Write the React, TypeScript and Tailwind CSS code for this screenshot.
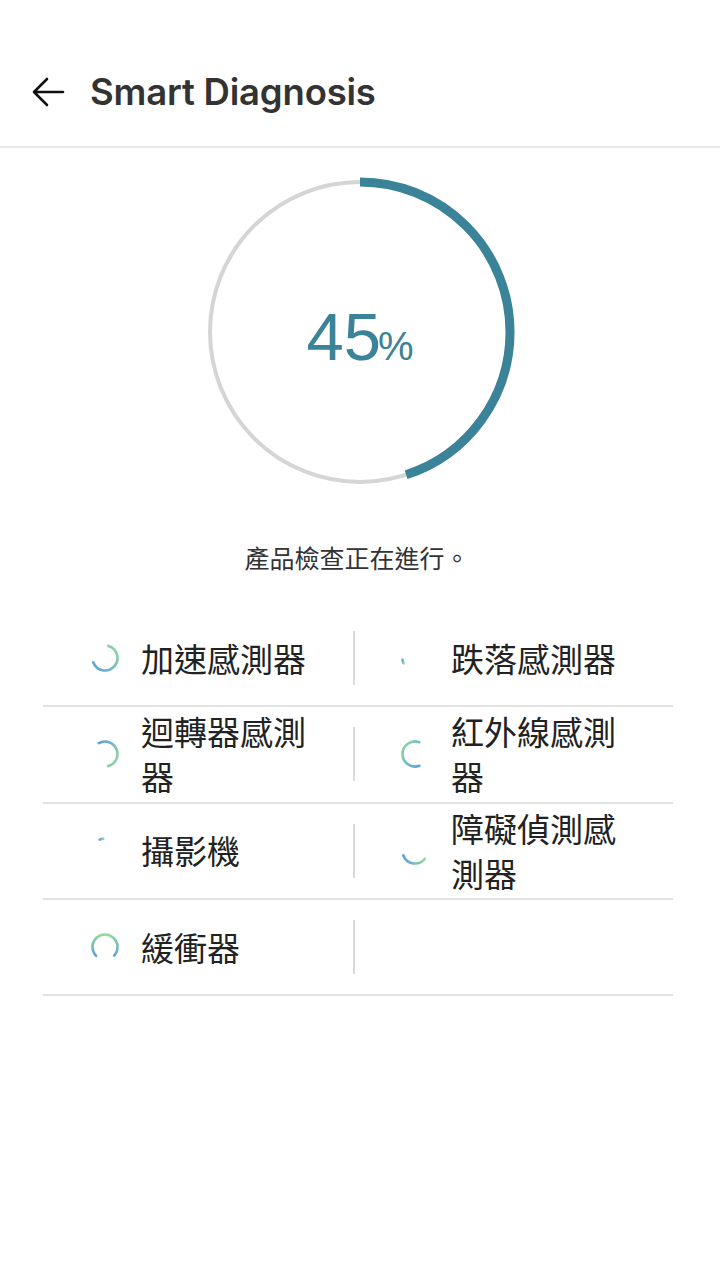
import { useId } from "react";

type Item = {
  label: string;
  // arc angles in degrees, clockwise from 12 o'clock
  start: number;
  end: number;
  // gradient direction: [x1, y1, x2, y2] in 0..1 box units
  dir: [number, number, number, number];
};

const BLUE = "#5f9fe0";
const GREEN = "#8fdb98";

const rows: (Item | null)[][] = [
  [
    { label: "加速感測器", start: 15, end: 250, dir: [0, 1, 1, 0] },
    { label: "跌落感測器", start: 245, end: 262, dir: [0, 0, 1, 1] },
  ],
  [
    { label: "迴轉器感測器", start: -30, end: 165, dir: [0, 0, 1, 1] },
    { label: "紅外線感測器", start: 160, end: 380, dir: [1, 1, 0, 0] },
  ],
  [
    { label: "攝影機", start: -25, end: -8, dir: [0, 0, 1, 0] },
    { label: "障礙偵測感測器", start: 128, end: 250, dir: [0, 0, 1, 0] },
  ],
  [{ label: "緩衝器", start: 225, end: 493, dir: [0, 1, 0, 0] }, null],
];

function point(cx: number, cy: number, r: number, deg: number) {
  const a = (deg * Math.PI) / 180;
  return [cx + r * Math.sin(a), cy - r * Math.cos(a)];
}

function arc(cx: number, cy: number, r: number, start: number, end: number) {
  const [x1, y1] = point(cx, cy, r, start);
  const [x2, y2] = point(cx, cy, r, end);
  const large = end - start > 180 ? 1 : 0;
  return `M ${x1} ${y1} A ${r} ${r} 0 ${large} 1 ${x2} ${y2}`;
}

function Spinner({ item }: { item: Item }) {
  const id = useId().replace(/:/g, "");
  const [x1, y1, x2, y2] = item.dir;
  return (
    <svg width="30" height="30" viewBox="0 0 30 30" className="shrink-0">
      <defs>
        <linearGradient id={id} x1={x1} y1={y1} x2={x2} y2={y2}>
          <stop offset="0" stopColor={BLUE} />
          <stop offset="1" stopColor={GREEN} />
        </linearGradient>
      </defs>
      <path
        d={arc(15, 15, 12.5, item.start, item.end)}
        fill="none"
        stroke={`url(#${id})`}
        strokeWidth="2.6"
        strokeLinecap="round"
      />
    </svg>
  );
}

function Cell({ item, right }: { item: Item | null; right?: boolean }) {
  return (
    <div className={right ? "flex w-[318px] items-center pl-[45px]" : "flex w-[310px] items-center pl-[47px]"}>
      {item ? (
        <>
          <Spinner item={item} />
          <span className="ml-[21px] max-w-[175px] text-[33px] leading-[45px] text-[#222]">
            {item.label}
          </span>
        </>
      ) : null}
    </div>
  );
}

function Ring() {
  const r = 150;
  const c = 2 * Math.PI * r;
  return (
    <div className="relative mx-auto mt-[24px] h-[320px] w-[320px]">
      <svg width="320" height="320" viewBox="0 0 320 320">
        <circle cx="160" cy="160" r={r} fill="none" stroke="#d5d5d5" strokeWidth="4" />
        <circle
          cx="160"
          cy="160"
          r={r}
          fill="none"
          stroke="#3a8398"
          strokeWidth="9"
          strokeDasharray={`${c * 0.45} ${c}`}
          transform="rotate(-90 160 160)"
        />
      </svg>
      <div className="absolute inset-0 flex items-center justify-center pt-[8px]">
        <span className="flex items-baseline font-['Liberation_Sans',sans-serif] text-[#3a8398]">
          <span className="text-[67px] leading-none">45</span>
          <span className="-ml-[3px] text-[40px] leading-none">%</span>
        </span>
      </div>
    </div>
  );
}

export default function App() {
  return (
    <div className="min-h-[1286px] w-[720px] bg-white font-['Noto_Sans_CJK_TC','Noto_Sans',sans-serif] text-[#222]">
      <header className="flex h-[148px] items-center border-b-2 border-[#e9e9e9] pt-[38px]">
        <svg width="34" height="32" viewBox="0 0 34 32" className="ml-[31px]" fill="none">
          <path
            d="M32 16 H3 M16 3 L3 16 L16 29"
            stroke="#111"
            strokeWidth="2.6"
            strokeLinecap="round"
            strokeLinejoin="round"
          />
        </svg>
        <h1 className="ml-[25px] font-['Inter',sans-serif] text-[36.5px] font-semibold tracking-[-0.2px] text-[#333]">
          Smart Diagnosis
        </h1>
      </header>

      <Ring />

      <p className="mt-[49px] pr-[6px] text-center text-[25px] leading-[32px] text-[#333]">
        產品檢查正在進行。
      </p>

      <div className="ml-[43px] mr-[47px] mt-[38px]">
        {rows.map((row, i) => (
          <div key={i} className="flex h-[96.3px] items-stretch border-b-2 border-[#e2e2e2]">
            <Cell item={row[0]} />
            <div className="my-auto h-[54px] w-[2px] bg-[#dadada]" />
            <Cell item={row[1]} right />
          </div>
        ))}
      </div>
    </div>
  );
}
